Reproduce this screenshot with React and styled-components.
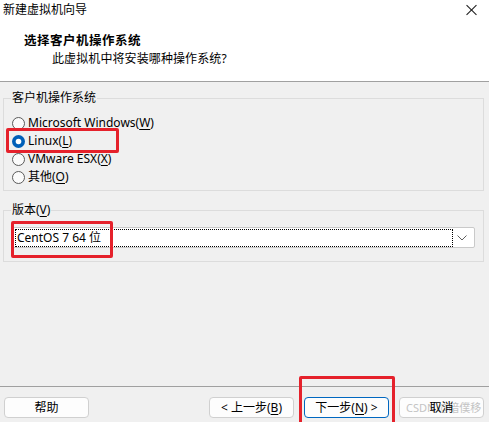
import React from "react";
import styled, { createGlobalStyle } from "styled-components";

const Global = createGlobalStyle`
  html, body { margin: 0; padding: 0; background: #f0f0f0; overflow: hidden; }
  * { box-sizing: border-box; }
`;

const FONT = `"Noto Sans", "Noto Sans CJK SC", sans-serif`;

const Window = styled.div`
  position: relative;
  width: 489px;
  height: 422px;
  overflow: hidden;
  background: #f0f0f0;
  display: flex;
  flex-direction: column;
  font-family: ${FONT};
  font-size: 12px;
  color: #000;
`;

const Header = styled.div`
  background: #fff;
  height: 82px;
  border-bottom: 1px solid #a0a0a0;
  display: flex;
  flex-direction: column;
`;

const TitleRow = styled.div`
  height: 20px;
  display: flex;
  align-items: center;
  padding: 0 12px 0 3px;
  line-height: 20px;
`;

const TitleText = styled.span`
  flex: 1;
`;

const CloseBox = styled.div`
  flex: none;
  position: relative;
  width: 11px;
  height: 11px;
  margin-top: -1px;
  &::before,
  &::after {
    content: "";
    position: absolute;
    left: 5px;
    top: -1.5px;
    width: 1px;
    height: 14px;
    background: #1a1a1a;
  }
  &::before { transform: rotate(45deg); }
  &::after { transform: rotate(-45deg); }
`;

const Heading = styled.div`
  margin-top: 12px;
  padding-left: 24px;
  line-height: 18px;
  font-weight: 700;
  font-size: 12.5px;
  letter-spacing: 0.5px;
`;

const SubHeading = styled.div`
  padding-left: 52px;
  line-height: 18px;
  letter-spacing: 0.1px;
`;

const Main = styled.div`
  padding: 8px 5px 0 3px;
  display: flex;
  flex-direction: column;
`;

const Group = styled.fieldset`
  margin: ${(p) => (p.$first ? "0" : "11px")} 0 0 0;
  border: 1px solid #dcdcdc;
  padding: ${(p) => p.$pad};
  min-width: 0;
`;

const Legend = styled.legend`
  padding: 0 1px;
  margin-left: -1px;
  line-height: 16px;
`;

const RadioRow = styled.label`
  display: flex;
  align-items: center;
  height: 18px;
  gap: 3px;
  line-height: 18px;
`;

const U = styled.span`
  text-decoration: underline;
  text-underline-offset: 2px;
`;

const Combo = styled.div`
  height: 21px;
  background: #fff;
  border: 1px solid #c9c9c9;
  border-radius: 2px;
  display: flex;
  align-items: center;
  padding: 1px 3px 1px 2px;
`;

const ComboValue = styled.div`
  flex: 1;
  height: 18px;
  border: 1px dotted #000;
  line-height: 16px;
  padding-left: 1px;
`;

const ComboArrow = styled.div`
  width: 18px;
  display: flex;
  justify-content: center;
  align-items: center;
`;

const Spacer = styled.div`
  flex: 1;
`;

const Footer = styled.div`
  border-top: 1px solid #a0a0a0;
  padding: 10px 5px 4px 4px;
  display: flex;
  align-items: center;
  gap: 10px;
`;

const Button = styled.div`
  position: relative;
  width: 85px;
  height: 21px;
  background: #fdfdfd;
  border: 1px solid ${(p) => (p.$default ? "#0067c0" : "#d0d0d0")};
  border-radius: 4px;
  display: flex;
  align-items: center;
  justify-content: center;
  line-height: 19px;
  overflow: hidden;
  ${(p) => p.$push && "margin-left: auto;"}
`;

const BtnText = styled.span`
  position: relative;
  z-index: 1;
`;

const Watermark = styled.span`
  position: absolute;
  left: 6px;
  top: 0;
  line-height: 19px;
  font-size: 11px;
  color: #c4c4c4;
  white-space: nowrap;
`;

const Mark = styled.div`
  position: absolute;
  border: 3px solid #e5212b;
  border-radius: 2px;
  pointer-events: none;
`;

const Radio = ({ checked }) => (
  <svg width="13" height="13" viewBox="0 0 13 13">
    {checked ? (
      <>
        <circle cx="6.5" cy="6.5" r="6.5" fill="#005fb8" />
        <circle cx="6.5" cy="6.5" r="2.8" fill="#fff" />
      </>
    ) : (
      <circle cx="6.5" cy="6.5" r="6" fill="#fbfbfb" stroke="#5a5a5a" strokeWidth="1" />
    )}
  </svg>
);

const Chevron = () => (
  <svg width="10" height="6" viewBox="0 0 10 6">
    <path d="M0.5 0.5 L5 5 L9.5 0.5" stroke="#606060" strokeWidth="1" fill="none" />
  </svg>
);

export default function App() {
  return (
    <>
      <Global />
      <Window>
        <Header>
          <TitleRow>
            <TitleText>新建虚拟机向导</TitleText>
            <CloseBox aria-label="关闭" />
          </TitleRow>
          <Heading>选择客户机操作系统</Heading>
          <SubHeading>此虚拟机中将安装哪种操作系统?</SubHeading>
        </Header>
        <Main>
          <Group $first $pad="8px 8px 4px 8px">
            <Legend>客户机操作系统</Legend>
            <RadioRow>
              <Radio />
              <span>
                Microsoft Windows(<U>W</U>)
              </span>
            </RadioRow>
            <RadioRow>
              <Radio checked />
              <span>
                Linux(<U>L</U>)
              </span>
            </RadioRow>
            <RadioRow>
              <Radio />
              <span>
                VMware ESX(<U>X</U>)
              </span>
            </RadioRow>
            <RadioRow>
              <Radio />
              <span>
                其他(<U>O</U>)
              </span>
            </RadioRow>
          </Group>
          <Group $pad="9px 8px 13px 8px">
            <Legend>
              版本(<U>V</U>)
            </Legend>
            <Combo>
              <ComboValue>CentOS 7 64 位</ComboValue>
              <ComboArrow>
                <Chevron />
              </ComboArrow>
            </Combo>
          </Group>
        </Main>
        <Spacer />
        <Footer>
          <Button>帮助</Button>
          <Button $push>
            &lt; 上一步(<U>B</U>)
          </Button>
          <Button $default>
            下一步(<U>N</U>) &gt;
          </Button>
          <Button>
            <Watermark>CSDN @暗僕移</Watermark>
            <BtnText>取消</BtnText>
          </Button>
        </Footer>
        <Mark style={{ left: 6, top: 128, width: 113, height: 25 }} />
        <Mark style={{ left: 11, top: 221, width: 102, height: 37 }} />
        <Mark style={{ left: 299, top: 376, width: 96, height: 60 }} />
      </Window>
    </>
  );
}
